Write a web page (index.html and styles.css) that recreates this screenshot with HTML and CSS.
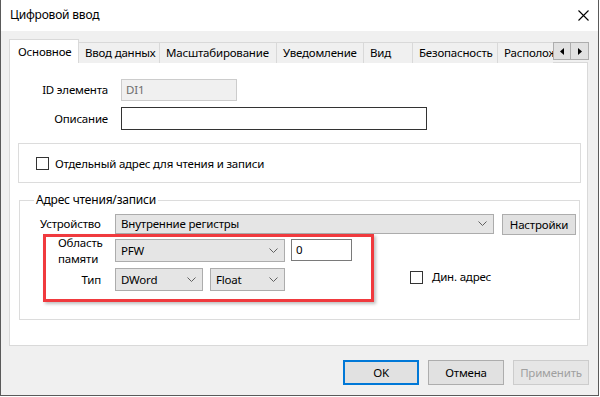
FILE: index.html
```html
<!DOCTYPE html>
<html lang="ru">
<head>
<meta charset="utf-8">
<title>Цифровой ввод</title>
<link rel="stylesheet" href="styles.css">
</head>
<body>
<div class="window">
  <div class="titlebar">
    <span class="title">Цифровой ввод</span>
    <svg class="close" width="11" height="11" viewBox="0 0 11 11"><path d="M0.5 0.5 L10.5 10.5 M10.5 0.5 L0.5 10.5" stroke="#000" stroke-width="1.1" fill="none"/></svg>
  </div>
  <div class="body">
    <div class="tabbar">
      <div class="tabs">
        <div class="tab active">Основное</div>
        <div class="tab">Ввод данных</div>
        <div class="tab">Масштабирование</div>
        <div class="tab">Уведомление</div>
        <div class="tab">Вид</div>
        <div class="tab">Безопасность</div>
        <div class="tab">Расположение</div>
      </div>
      <div class="scroll">
        <div class="sbtn"><svg width="4" height="7" viewBox="0 0 4 7"><path d="M4 0 L0 3.5 L4 7 Z" fill="#000"/></svg></div>
        <div class="sbtn"><svg width="4" height="7" viewBox="0 0 4 7"><path d="M0 0 L4 3.5 L0 7 Z" fill="#000"/></svg></div>
      </div>
    </div>
    <div class="panel">
      <div class="row r-id">
        <span class="lbl">ID элемента</span>
        <div class="textbox disabled idbox">DI1</div>
      </div>
      <div class="row r-desc">
        <span class="lbl">Описание</span>
        <div class="textbox descbox"></div>
      </div>
      <div class="group1">
        <span class="check"></span>
        <span>Отдельный адрес для чтения и записи</span>
      </div>
      <fieldset class="group2">
        <legend>Адрес чтения/записи</legend>
        <div class="g-row r-dev">
          <span class="glbl">Устройство</span>
          <div class="combo devcombo"><span>Внутренние регистры</span><svg class="chev" width="9" height="5" viewBox="0 0 9 5"><path d="M0.5 0.5 L4.5 4.5 L8.5 0.5" stroke="#606060" fill="none"/></svg></div>
          <div class="btn setbtn">Настройки</div>
        </div>
        <div class="g-row r-mem">
          <span class="glbl mem">Область<br>памяти</span>
          <div class="combo pfw"><span>PFW</span><svg class="chev" width="9" height="5" viewBox="0 0 9 5"><path d="M0.5 0.5 L4.5 4.5 L8.5 0.5" stroke="#606060" fill="none"/></svg></div>
          <div class="textbox numbox">0</div>
        </div>
        <div class="g-row r-type">
          <span class="glbl typ">Тип</span>
          <div class="combo dword"><span>DWord</span><svg class="chev" width="9" height="5" viewBox="0 0 9 5"><path d="M0.5 0.5 L4.5 4.5 L8.5 0.5" stroke="#606060" fill="none"/></svg></div>
          <div class="combo float"><span>Float</span><svg class="chev" width="9" height="5" viewBox="0 0 9 5"><path d="M0.5 0.5 L4.5 4.5 L8.5 0.5" stroke="#606060" fill="none"/></svg></div>
          <div class="dyn"><span class="check"></span><span>Дин. адрес</span></div>
        </div>
        <div class="highlight"></div>
      </fieldset>
    </div>
    <div class="footer">
      <div class="btn fbtn ok">OK</div>
      <div class="btn fbtn">Отмена</div>
      <div class="btn fbtn disabledbtn">Применить</div>
    </div>
  </div>
</div>
</body>
</html>
```
FILE: styles.css
```css
* { box-sizing: border-box; }
html, body { margin: 0; padding: 0; background: #fff; }
body {
  font-family: "Noto Sans", "Segoe UI", sans-serif;
  font-size: 11.5px;
  letter-spacing: -0.2px;
  color: #000;
  line-height: 16px;
}
.window {
  width: 599px;
  height: 396px;
  border: 1px solid #5a5a5a;
  border-top: none;
  background: #f0f0f0;
  display: flex;
  flex-direction: column;
}
.titlebar {
  height: 31px;
  background: #fff;
  display: flex;
  align-items: center;
  justify-content: space-between;
  padding: 0 9px 0 9px;
}
.title { font-size: 12px; margin-top: -1px; }
.body { flex: 1; padding: 8px 9px 0 8px; }

.tabbar { display: flex; height: 24px; position: relative; z-index: 2; }
.tabs { display: flex; align-items: flex-end; width: 544px; overflow: hidden; }
.tab {
  flex: none;
  height: 21px;
  border: 1px solid #d9d9d9;
  border-left: none;
  border-bottom: none;
  background: #f0f0f0;
  padding: 2px 0 0 6px;
  white-space: nowrap;
  overflow: hidden;
}
.tab:nth-child(1) { width: 70px; }
.tab:nth-child(2) { width: 81px; }
.tab:nth-child(3) { width: 117px; }
.tab:nth-child(4) { width: 87px; }
.tab:nth-child(5) { width: 49px; }
.tab:nth-child(6) { width: 85px; }
.tab:nth-child(7) { width: 80px; }
.tab.active {
  height: 24px;
  background: #fff;
  border-left: 1px solid #d9d9d9;
  padding: 4px 0 0 8px;
}
.scroll { display: flex; margin-top: 3px; height: 18px; }
.sbtn {
  width: 18px; height: 18px;
  background: #e1e1e1;
  border: 1px solid #adadad;
  display: flex; align-items: center; justify-content: center;
}
.sbtn + .sbtn { border-left: none; }

.panel {
  width: 579px;
  height: 284px;
  margin-top: -1px;
  background: #fff;
  border: 1px solid #d9d9d9;
  padding: 16px 6px 0 8px;
  position: relative;
  z-index: 1;
}
.row { display: flex; align-items: center; }
.lbl { width: 90px; text-align: right; margin-right: 13px; }
.textbox {
  border: 1px solid #7a7a7a;
  background: #fff;
  padding: 0 4px;
  display: flex; align-items: center;
}
.idbox { width: 116px; height: 22px; }
.disabled { background: #f0f0f0; border-color: #cccccc; color: #6d6d6d; }
.r-desc { margin-top: 6px; }
.descbox { width: 306px; height: 23px; border-color: #333; }
.group1 {
  margin-top: 13px;
  width: 563px;
  height: 40px;
  border: 1px solid #dcdcdc;
  display: flex; align-items: center;
  padding-left: 17px;
  padding-top: 1px;
}
.check {
  display: inline-block;
  width: 13px; height: 13px;
  border: 1px solid #333;
  background: #fff;
  margin-right: 6px;
  flex: none;
}
.group2 {
  margin: 9px 0 0 1px;
  width: 561px;
  height: 128px;
  border: 1px solid #dcdcdc;
  padding: 0 0 0 20px;
  position: relative;
}
.group2 legend { padding: 0 2px; margin-left: -6px; line-height: 16px; font-size: 12px; }
.g-row { display: flex; align-items: center; }
.glbl { width: 75px; flex: none; }
.r-dev { margin-top: 4px; }
.combo {
  height: 21px;
  background: #e5e5e5;
  border: 1px solid #acacac;
  display: flex; align-items: center; justify-content: space-between;
  padding: 0 6px 0 5px;
  flex: none;
}
.devcombo { width: 379px; height: 20px; }
.btn {
  background: #e1e1e1;
  border: 1px solid #adadad;
  display: flex; align-items: center; justify-content: center;
}
.setbtn { width: 74px; height: 21px; margin-left: 8px; margin-top: 2px; }
.r-mem { align-items: flex-start; }
.mem { padding-left: 18px; }
.pfw { width: 170px; height: 23px; margin-top: 4px; }
.numbox { width: 61px; height: 22px; margin-left: 6px; margin-top: 4px; }
.r-type { margin-top: 1px; align-items: flex-start; }
.typ { text-align: right; padding-right: 14px; line-height: 23px; }
.dword { width: 88px; height: 23px; }
.float { width: 75px; height: 23px; margin-left: 7px; }
.dyn { display: flex; align-items: center; margin-left: 125px; margin-top: 1px; }
.dyn .check { margin-right: 9px; }
.highlight {
  position: absolute;
  left: 23px;
  top: 26px;
  width: 331px;
  height: 68px;
  border: 3px solid #f03a3e;
  box-shadow: 2px 2px 3px rgba(0,0,0,0.25);
  pointer-events: none;
}

.footer {
  display: flex;
  justify-content: flex-end;
  gap: 9px;
  margin-top: 14px;
}
.fbtn { width: 76px; height: 25px; }
.ok { border: 2px solid #0078d7; }
.disabledbtn { color: #a0a0a0; background: #e6e6e6; border-color: #cccccc; }
```
